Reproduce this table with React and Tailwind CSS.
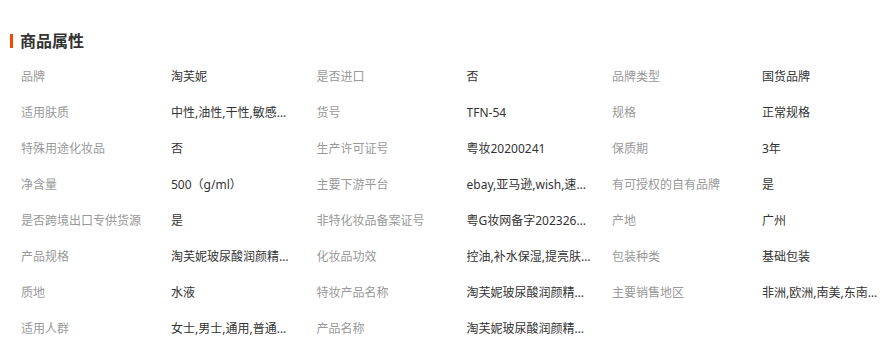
const rows = [
  [["品牌", "淘芙妮"], ["是否进口", "否"], ["品牌类型", "国货品牌"]],
  [["适用肤质", "中性,油性,干性,敏感性,混合性"], ["货号", "TFN-54"], ["规格", "正常规格"]],
  [["特殊用途化妆品", "否"], ["生产许可证号", "粤妆20200241"], ["保质期", "3年"]],
  [["净含量", "500（g/ml）"], ["主要下游平台", "ebay,亚马逊,wish,速卖通"], ["有可授权的自有品牌", "是"]],
  [["是否跨境出口专供货源", "是"], ["非特化妆品备案证号", "粤G妆网备字2023266123"], ["产地", "广州"]],
  [["产品规格", "淘芙妮玻尿酸润颜精华液"], ["化妆品功效", "控油,补水保湿,提亮肤色"], ["包装种类", "基础包装"]],
  [["质地", "水液"], ["特妆产品名称", "淘芙妮玻尿酸润颜精华液"], ["主要销售地区", "非洲,欧洲,南美,东南亚"]],
  [["适用人群", "女士,男士,通用,普通人群"], ["产品名称", "淘芙妮玻尿酸润颜精华液"], null],
];

export default function App() {
  return (
    <div className="w-[886px] h-[347px] bg-white overflow-hidden font-['Noto_Sans','Noto_Sans_CJK_SC',sans-serif]">
      {/* title */}
      <div className="flex items-center gap-[7px] pl-[10px] pt-[34px] h-[48px]">
        <span className="w-[3px] h-[14px] bg-[#ff4400]" />
        <span className="text-[16px] leading-[16px] font-bold text-[#333]">商品属性</span>
      </div>

      <div className="pt-[11px] pl-[21px] pr-[8px]">
        {rows.map((row, i) => (
          <div key={i} className="flex h-[36px] items-center text-[12px] leading-[16px]">
            {row.map((cell, j) =>
              cell ? (
                <div key={j} className={j < 2 ? "flex w-[295.5px] shrink-0" : "flex flex-1 min-w-0"}>
                  <span className="w-[150px] shrink-0 text-[#999] whitespace-nowrap">{cell[0]}</span>
                  <span className="w-[125px] min-w-0 truncate text-[#333]">{cell[1]}</span>
                </div>
              ) : null
            )}
          </div>
        ))}
      </div>
    </div>
  );
}
